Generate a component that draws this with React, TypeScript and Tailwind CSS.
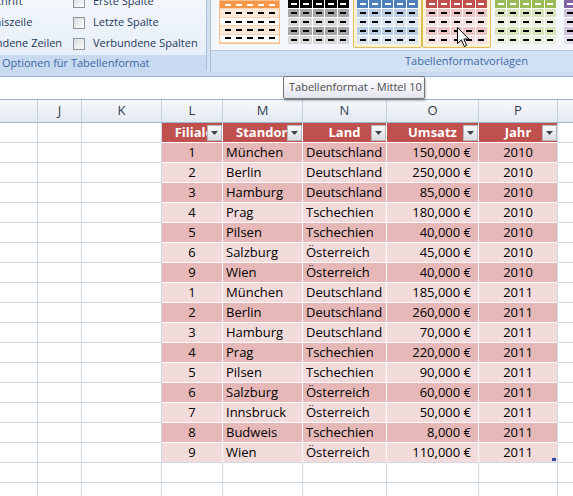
import React from 'react';

const colW = ['w-[38px]', 'w-[44px]', 'w-[80px]', 'w-[61px]', 'w-[80px]', 'w-[84px]', 'w-[92px]', 'w-[79px]'];
const letters = ['', 'J', 'K', 'L', 'M', 'N', 'O', 'P'];

const rows: [number, string, string, string, number][] = [
  [1, 'München', 'Deutschland', '150,000 €', 2010],
  [2, 'Berlin', 'Deutschland', '250,000 €', 2010],
  [3, 'Hamburg', 'Deutschland', '85,000 €', 2010],
  [4, 'Prag', 'Tschechien', '180,000 €', 2010],
  [5, 'Pilsen', 'Tschechien', '40,000 €', 2010],
  [6, 'Salzburg', 'Österreich', '45,000 €', 2010],
  [9, 'Wien', 'Österreich', '40,000 €', 2010],
  [1, 'München', 'Deutschland', '185,000 €', 2011],
  [2, 'Berlin', 'Deutschland', '260,000 €', 2011],
  [3, 'Hamburg', 'Deutschland', '70,000 €', 2011],
  [4, 'Prag', 'Tschechien', '220,000 €', 2011],
  [5, 'Pilsen', 'Tschechien', '90,000 €', 2011],
  [6, 'Salzburg', 'Österreich', '60,000 €', 2011],
  [7, 'Innsbruck', 'Österreich', '50,000 €', 2011],
  [8, 'Budweis', 'Tschechien', '8,000 €', 2011],
  [9, 'Wien', 'Österreich', '110,000 €', 2011],
];

const thumbs = [
  { header: 'bg-[#000000]', a: 'bg-[#A5A5A5]', b: 'bg-[#D9D9D9]', frame: false },
  { header: 'bg-[#4F81BD]', a: 'bg-[#B8CCE4]', b: 'bg-[#DBE5F1]', frame: true },
  { header: 'bg-[#C0504D]', a: 'bg-[#EBC4C3]', b: 'bg-[#F5E1E0]', frame: true },
  { header: 'bg-[#9BBB59]', a: 'bg-[#D7E4BC]', b: 'bg-[#EBF1DE]', frame: false },
  { header: 'bg-[#8064A2]', a: 'bg-[#CCC0DA]', b: 'bg-[#E4DFEC]', frame: false },
];

const Checkbox = () => (
  <div className="w-[12px] h-[12px] flex-none border border-[#8E9299] bg-gradient-to-br from-[#D8DADD] to-white" />
);

const Option = ({ label }: { label: string }) => (
  <div className="h-[21px] flex items-center gap-[8px] whitespace-nowrap">
    <Checkbox />
    <span>{label}</span>
  </div>
);

const Dash = ({ light }: { light?: boolean }) => (
  <div className={light ? 'w-[6px] h-[2px] bg-white' : 'w-[6px] h-[2px] bg-black'} />
);

const OrangeThumb = () => (
  <div className="w-[61px] h-[44px] flex flex-col border border-[#F9BF8F] bg-white">
    {['bg-[#F79646]', 'bg-[#FDE9D9]', 'bg-white', 'bg-[#FDE9D9]', 'bg-white'].map((bg, i) => (
      <div key={i} className={`flex-1 flex items-center justify-around px-[2px] border-b border-[#FBD4B4] ${bg}`}>
        {[0, 1, 2, 3, 4].map((c) => (
          <Dash key={c} light={i === 0} />
        ))}
      </div>
    ))}
  </div>
);

const Thumb = ({ header, a, b }: { header: string; a: string; b: string }) => (
  <div className="w-[61px] h-[44px] flex flex-col gap-px bg-white">
    {[header, a, b, a, b].map((bg, i) => (
      <div key={i} className="flex-1 flex gap-px">
        {[0, 1, 2, 3, 4].map((c) => (
          <div key={c} className={`flex-1 flex items-center justify-center ${bg}`}>
            <Dash light={i === 0} />
          </div>
        ))}
      </div>
    ))}
  </div>
);

const FilterButton = () => (
  <div className="absolute right-0 top-[2px] w-[15px] h-[16px] border border-[#B4B8BE] bg-gradient-to-b from-[#FAFAFA] to-[#DADDE2] flex items-center justify-center">
    <svg width="7" height="4" viewBox="0 0 7 4">
      <path d="M0 0 L7 0 L3.5 4 Z" fill="#3C4450" />
    </svg>
  </div>
);

const Cursor = () => (
  <svg className="absolute left-[457px] top-[27px]" width="13" height="21" viewBox="0 0 13 21">
    <path d="M0.5 0.5 L0.5 16.5 L4.5 12.8 L7.3 19.5 L9.6 18.5 L6.9 12 L11.8 12 Z" fill="white" stroke="black" strokeWidth="1" strokeLinejoin="round" />
  </svg>
);

export default function App() {
  return (
    <div className="relative w-[573px] h-[496px] overflow-hidden bg-white font-['Open_Sans',sans-serif] text-[13px] text-black">
      {/* ribbon */}
      <div className="h-[72px] flex bg-[#D3E1F3] text-[11px]">
        <div className="w-[207px] flex-none flex flex-col border-r border-[#A9BDD8] rounded-br-[3px] overflow-hidden">
          <div className="h-[55px] bg-gradient-to-b from-[#F3F7FC] to-[#E6EEF8] overflow-hidden text-[#1E395B]">
            <div className="flex ml-[-55px] mt-[-9px]">
              <div className="w-[128px] flex-none flex flex-col">
                <Option label="Überschrift" />
                <Option label="Ergebniszeile" />
                <Option label="Verbundene Zeilen" />
              </div>
              <div className="flex flex-col">
                <Option label="Erste Spalte" />
                <Option label="Letzte Spalte" />
                <Option label="Verbundene Spalten" />
              </div>
            </div>
          </div>
          <div className="h-[17px] bg-[#C8DAF0] flex items-center pl-[2px] text-[#3D68A6] whitespace-nowrap">
            Optionen für Tabellenformat
          </div>
        </div>
        <div className="flex-1 ml-[3px] flex flex-col border-l border-[#A9BDD8] bg-gradient-to-b from-[#EEF3FA] to-[#DCE7F5]">
          <div className="h-[51px] flex items-end pb-[2px] pl-[4px] border-b border-[#B4C6DD] bg-[#F4F7FB] overflow-hidden">
            <div className="w-[69px] flex-none p-[3px] border border-transparent">
              <OrangeThumb />
            </div>
            {thumbs.map((t, i) => (
              <div
                key={i}
                className={
                  t.frame
                    ? 'w-[69px] flex-none p-[3px] border border-[#E3BC5A] bg-[#FCF3D6] rounded-[2px]'
                    : 'w-[69px] flex-none p-[3px] border border-transparent'
                }
              >
                <Thumb header={t.header} a={t.a} b={t.b} />
              </div>
            ))}
          </div>
          <div className="flex-1 flex items-center pl-[194px] bg-[#D2E2F4] text-[#3D68A6] whitespace-nowrap">
            Tabellenformatvorlagen
          </div>
        </div>
      </div>
      <div className="h-[5px] bg-[#C9D9EE] border-b border-[#9AAFCB]" />
      {/* formula area */}
      <div className="h-[23px] bg-white border-b border-[#9EB2CC]" />
      {/* column header */}
      <div className="h-[23px] flex bg-gradient-to-b from-[#F7F9FC] to-[#E3E9F1] border-b border-[#9EB6CE] text-[#333F4F]">
        {letters.map((l, i) => (
          <div key={i} className={`${colW[i]} flex-none flex items-center justify-center border-r border-[#C5D1E0]`}>
            {l}
          </div>
        ))}
        <div className="flex-1" />
      </div>
      {/* table header row */}
      <div className="h-[20px] flex">
        {[0, 1, 2].map((i) => (
          <div key={i} className={`${colW[i]} flex-none border-r border-b border-[#D0D7E5]`} />
        ))}
        {['Filiale', 'Standort', 'Land', 'Umsatz', 'Jahr'].map((h, i) => (
          <div
            key={h}
            className={`${colW[i + 3]} relative flex-none flex items-center justify-center overflow-hidden whitespace-nowrap bg-[#C0504D] text-white font-bold border-b border-white ${i === 4 ? 'border-r border-r-[#D0D7E5]' : 'border-r'}`}
          >
            <span className={i < 2 ? 'pl-[4px]' : ''}>{h}</span>
            <FilterButton />
          </div>
        ))}
        <div className="flex-1 border-b border-[#D0D7E5]" />
      </div>
      {/* data rows */}
      {rows.map((r, ri) => {
        const bg = ri % 2 === 0 ? 'bg-[#E6B8B7]' : 'bg-[#F2DCDB]';
        const last = ri === rows.length - 1;
        const bb = last ? 'border-b-[#D0D7E5]' : 'border-b-white';
        return (
          <div key={ri} className="h-[20px] flex">
            {[0, 1, 2].map((i) => (
              <div key={i} className={`${colW[i]} flex-none border-r border-b border-[#D0D7E5]`} />
            ))}
            <div className={`${colW[3]} flex-none flex items-center justify-center border-r border-b border-white ${bb} ${bg}`}>{r[0]}</div>
            <div className={`${colW[4]} flex-none flex items-center pl-[3px] border-r border-b border-white ${bb} ${bg}`}>{r[1]}</div>
            <div className={`${colW[5]} flex-none flex items-center pl-[3px] border-r border-b border-white ${bb} ${bg}`}>{r[2]}</div>
            <div className={`${colW[6]} flex-none flex items-center justify-end pr-[7px] border-r border-b border-white ${bb} ${bg}`}>{r[3]}</div>
            <div className={`${colW[7]} relative flex-none flex items-center justify-center border-r border-b border-[#D0D7E5] ${last ? '' : 'border-b-white'} ${bg}`}>
              {r[4]}
              {last && <div className="absolute right-[1px] bottom-[1px] w-[4px] h-[3px] bg-[#2B4DA0]" />}
            </div>
            <div className="flex-1 border-b border-[#D0D7E5]" />
          </div>
        );
      })}
      {[0, 1].map((e) => (
        <div key={e} className="h-[20px] flex">
          {colW.map((w, i) => (
            <div key={i} className={`${w} flex-none border-r border-b border-[#D0D7E5]`} />
          ))}
          <div className="flex-1 border-b border-[#D0D7E5]" />
        </div>
      ))}
      {/* tooltip */}
      <div className="absolute left-[283px] top-[76px] w-[142px] h-[23px] flex items-center pl-[5px] border border-[#767676] rounded-[2px] bg-gradient-to-b from-white to-[#E4E5F0] shadow-[1px_2px_2px_rgba(0,0,0,0.25)] text-[11px] text-[#4C4C4C] whitespace-nowrap">
        Tabellenformat - Mittel 10
      </div>
      <Cursor />
    </div>
  );
}
